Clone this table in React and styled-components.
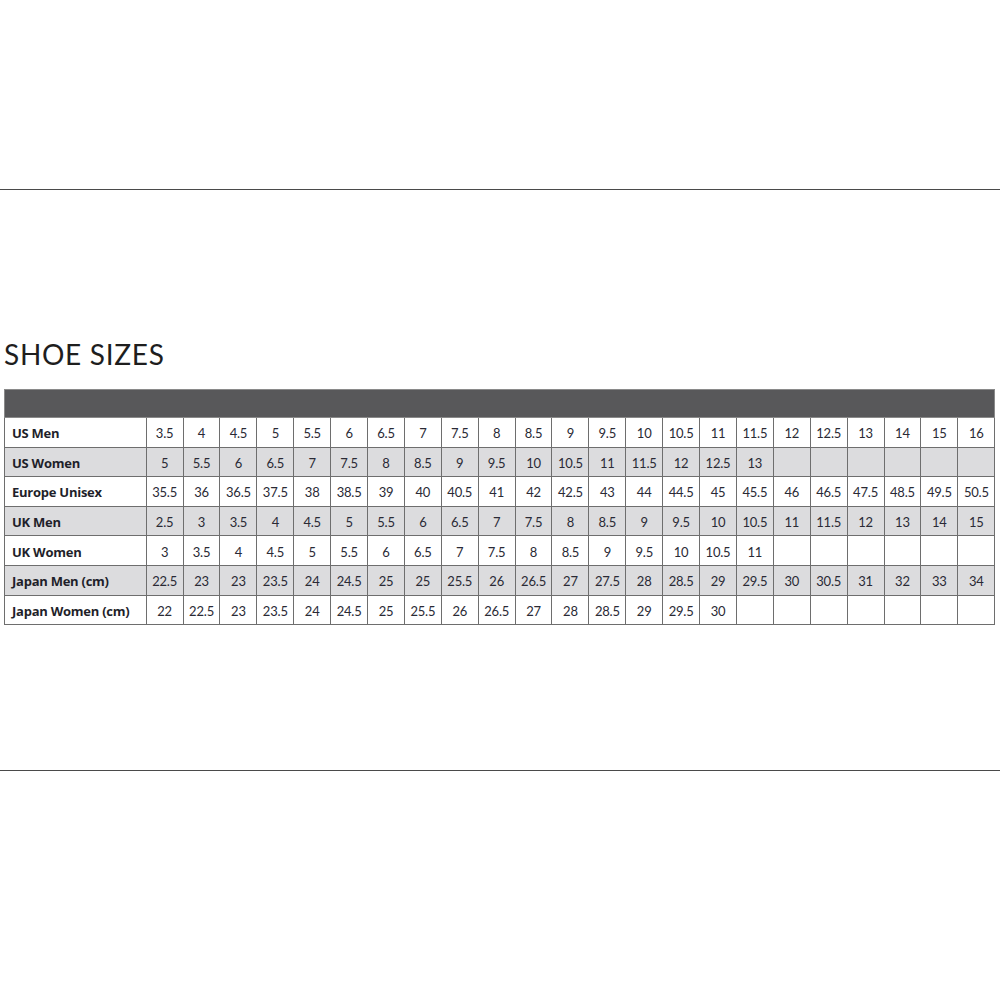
import React from "react";
import styled, { createGlobalStyle } from "styled-components";

const Global = createGlobalStyle`
  html, body { margin: 0; padding: 0; background: #fff; }
  body { font-family: Lato, "Open Sans", Arial, sans-serif; color: #222; }
`;

const Page = styled.div`
  width: 1000px;
  height: 1000px;
  padding-top: 189px;
  box-sizing: border-box;
  display: flex;
  flex-direction: column;
`;

const Rule = styled.div`
  height: 1px;
  background: #4a4a4a;
  margin-top: ${(p) => p.$mt || 0}px;
`;

const Title = styled.h1`
  margin: 148px 0 0 4px;
  font-family: Lato, Arial, sans-serif;
  font-weight: 400;
  font-size: 28px;
  line-height: 32px;
  letter-spacing: 0.7px;
  color: #1e1e1e;
`;

const Table = styled.table`
  margin: 19px 0 0 4px;
  width: 991px;
  border-collapse: collapse;
  table-layout: fixed;
  border: 1.5px solid #8a8a8a;
`;

const HeadCell = styled.th`
  height: 27px;
  padding: 0;
  background: #58585a;
  border: 1.5px solid #8a8a8a;
`;

const Row = styled.tr`
  height: 29.6px;
  background: ${(p) => (p.$shade ? "#dcdcde" : "#ffffff")};
`;

const Label = styled.td`
  padding: 2px 0 0 7px;
  font-family: "Open Sans", Lato, Arial, sans-serif;
  font-weight: 700;
  font-size: 13px;
  color: #1f1f2a;
  border: 1px solid #6e6e6e;
  white-space: nowrap;
  letter-spacing: -0.25px;
`;

const Cell = styled.td`
  padding: 2px 0 0 0;
  text-align: center;
  font-family: Lato, Arial, sans-serif;
  font-size: 13px;
  color: #2a2a35;
  border: 1px solid #6e6e6e;
  white-space: nowrap;
  letter-spacing: -0.2px;
`;

const rows = [
  ["US Men", ["3.5","4","4.5","5","5.5","6","6.5","7","7.5","8","8.5","9","9.5","10","10.5","11","11.5","12","12.5","13","14","15","16"]],
  ["US Women", ["5","5.5","6","6.5","7","7.5","8","8.5","9","9.5","10","10.5","11","11.5","12","12.5","13"]],
  ["Europe Unisex", ["35.5","36","36.5","37.5","38","38.5","39","40","40.5","41","42","42.5","43","44","44.5","45","45.5","46","46.5","47.5","48.5","49.5","50.5"]],
  ["UK Men", ["2.5","3","3.5","4","4.5","5","5.5","6","6.5","7","7.5","8","8.5","9","9.5","10","10.5","11","11.5","12","13","14","15"]],
  ["UK Women", ["3","3.5","4","4.5","5","5.5","6","6.5","7","7.5","8","8.5","9","9.5","10","10.5","11"]],
  ["Japan Men (cm)", ["22.5","23","23","23.5","24","24.5","25","25","25.5","26","26.5","27","27.5","28","28.5","29","29.5","30","30.5","31","32","33","34"]],
  ["Japan Women (cm)", ["22","22.5","23","23.5","24","24.5","25","25.5","26","26.5","27","28","28.5","29","29.5","30"]],
];

const COLS = 23;

export default function App() {
  return (
    <>
      <Global />
      <Page>
        <Rule />
        <Title>SHOE SIZES</Title>
        <Table>
          <colgroup>
            <col style={{ width: "141.7px" }} />
            {Array.from({ length: COLS }).map((_, i) => (
              <col key={i} style={{ width: "36.9px" }} />
            ))}
          </colgroup>
          <thead>
            <tr>
              <HeadCell colSpan={COLS + 1} />
            </tr>
          </thead>
          <tbody>
            {rows.map(([label, vals], r) => (
              <Row key={label} $shade={r % 2 === 1}>
                <Label>{label}</Label>
                {Array.from({ length: COLS }).map((_, i) => (
                  <Cell key={i}>{vals[i] || ""}</Cell>
                ))}
              </Row>
            ))}
          </tbody>
        </Table>
        <Rule $mt={145} />
      </Page>
    </>
  );
}
